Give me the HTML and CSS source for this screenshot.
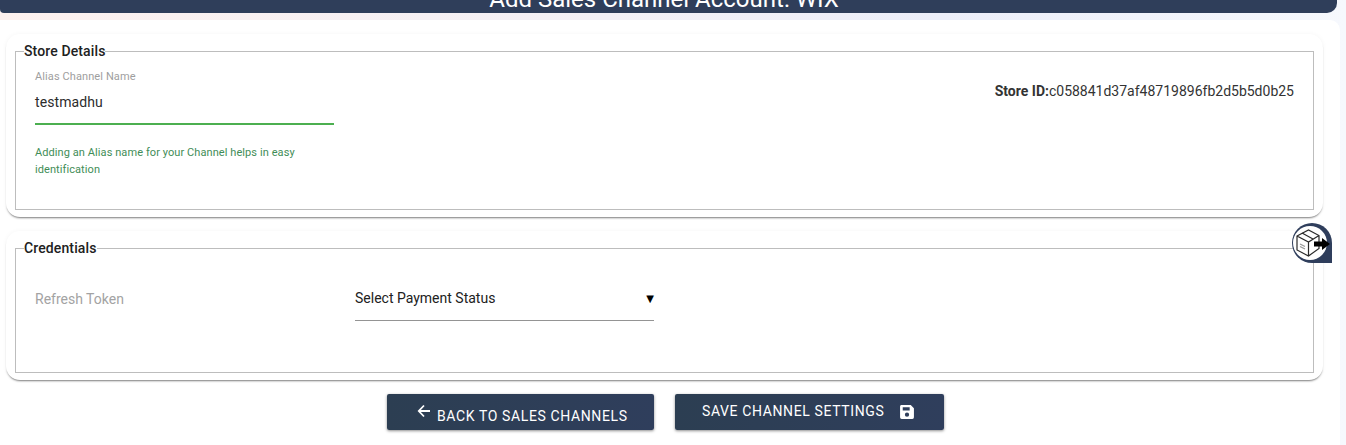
FILE: index.html
```html
<!DOCTYPE html>
<html lang="en">
<head>
<meta charset="utf-8">
<title>Add Sales Channel Account: WIX</title>
<link rel="stylesheet" href="styles.css">
</head>
<body>
<div class="page">
  <header class="topbar"><h1 class="title">Add Sales Channel Account: WIX</h1></header>
  <main class="panel">
    <section class="card card-store">
      <fieldset class="group group-store">
        <legend class="legend">Store Details</legend>
        <div class="store-row">
          <div class="alias">
            <label class="alias-label">Alias Channel Name</label>
            <div class="alias-value">testmadhu</div>
            <p class="alias-help">Adding an Alias name for your Channel helps in easy identification</p>
          </div>
          <div class="store-id"><b>Store ID:</b>c058841d37af48719896fb2d5b5d0b25</div>
        </div>
      </fieldset>
    </section>
    <section class="card card-cred">
      <fieldset class="group group-cred">
        <legend class="legend">Credentials</legend>
        <div class="cred-row">
          <div class="token">Refresh Token</div>
          <div class="select"><span>Select Payment Status</span><span class="caret">▼</span></div>
        </div>
      </fieldset>
    </section>
    <div class="actions">
      <button class="btn btn-back" type="button">
        <svg class="arrow" width="16" height="16" viewBox="0 0 16 16" aria-hidden="true"><path d="M14 8H3M8 2.500 2.800 8 8 13.500" fill="none" stroke="#fff" stroke-width="1.800"/></svg>
        <span>BACK TO SALES CHANNELS</span>
      </button>
      <button class="btn btn-save" type="button">
        <span>SAVE CHANNEL SETTINGS</span>
        <svg class="disk" width="16" height="16" viewBox="0 0 15 15" aria-hidden="true"><path fill-rule="evenodd" fill="#fff" d="M2 1h9l3 3v8.500a1.500 1.500 0 0 1-1.500 1.500h-10A1.500 1.500 0 0 1 1 12.500v-10A1.500 1.500 0 0 1 2 1zM3.500 3v3h6.500V3zM7.500 8a2 2 0 1 0 0 4 2 2 0 0 0 0-4z"/></svg>
      </button>
    </div>
  </main>
  <div class="badge">
    <svg width="38" height="36" viewBox="0 0 38 36" aria-hidden="true">
      <ellipse cx="17" cy="18" rx="17" ry="17" fill="#fff"/>
      <path d="M4 11 15.500 5 26 10.500v13L15.500 31 4 25zM4 11l11.500 6L26 10.500M15.500 17v14M9 8l11 6" fill="none" stroke="#2b2b2b" stroke-width="1.200"/>
      <path d="M7 19l5 2.500M7 21.500l5 2.500" stroke="#999" stroke-width="1.300"/>
      <path d="M21 16.500h8V13l8 6-8 6v-3.500h-8z" fill="#000"/>
    </svg>
  </div>
</div>
</body>
</html>
```
FILE: styles.css
```css
* { box-sizing: border-box; }
html, body { margin: 0; height: 100%; overflow: hidden; }
body { font-family: Roboto, "Liberation Sans", sans-serif; color: #212121; background: #f7f8fc; }
.page {
  position: relative;
  width: 1346px;
  height: 445px;
  overflow: hidden;
  background: linear-gradient(90deg, #fdf1ef 0%, #f3f0f6 45%, #eceef9 70%, #f6f8fd 100%);
}
.topbar {
  width: 1337px;
  height: 13px;
  background: #2f3e5a;
  border-radius: 0 0 10px 4px;
  display: flex;
  justify-content: center;
  align-items: flex-end;
  overflow: hidden;
}
.title {
  margin: 0 9px 2px 0;
  font-size: 24px;
  line-height: 24px;
  font-weight: 400;
  color: #fff;
  white-space: nowrap;
}
.panel {
  margin-top: 7px;
  width: 1340px;
  height: 425px;
  background: #fff;
  border-radius: 0 10px 0 0;
  padding: 14px 17px 0 6px;
}
.card {
  background: #fff;
  border-radius: 14px;
  box-shadow: 0 2px 2px -1px rgba(0, 0, 0, 0.5), 0 0 5px rgba(0, 0, 0, 0.04);
  padding: 9px 9px 7px;
}
.card-store { height: 183px; }
.card-cred { height: 149px; margin-top: 14px; }
.group {
  margin: 0;
  padding: 0;
  border: 1px solid #bdbdbd;
  min-width: 0;
}
.group-store { height: 167px; }
.group-cred { height: 133px; }
.legend {
  margin-left: 8px;
  padding: 0;
  font-size: 14px;
  line-height: 16px;
  font-weight: 500;
  letter-spacing: 0.12px;
  color: #212121;
}
.store-row {
  display: flex;
  justify-content: space-between;
  padding: 11px 19px 0;
}
.alias { width: 299px; }
.alias-label {
  display: block;
  font-size: 11px;
  line-height: 14px;
  letter-spacing: 0.1px;
  color: #9e9e9e;
}
.alias-value {
  box-sizing: content-box;
  height: 31px;
  padding-top: 8px;
  font-size: 14px;
  line-height: 20px;
  letter-spacing: 0.1px;
  border-bottom: 2px solid #4caf50;
  color: #2c2c2c;
}
.alias-help {
  margin: 19px 0 0;
  font-size: 11px;
  line-height: 17px;
  letter-spacing: 0.08px;
  color: #3f8d57;
}
.store-id {
  margin-top: 13px;
  font-size: 14px;
  line-height: 16px;
  color: #333;
}
.store-id b { font-weight: 700; }
.cred-row {
  display: flex;
  align-items: flex-start;
  padding: 28px 0 0 19px;
}
.token {
  width: 320px;
  padding-top: 7px;
  font-size: 14px;
  line-height: 16px;
  color: #a3a3a3;
}
.select {
  width: 299px;
  height: 37px;
  display: flex;
  justify-content: space-between;
  align-items: flex-start;
  padding-top: 6px;
  font-size: 14px;
  line-height: 16px;
  color: #212121;
  border-bottom: 1px solid #949494;
}
.caret { font-size: 10px; line-height: 18px; font-family: "DejaVu Sans", sans-serif; color: #000; }
.actions {
  display: flex;
  margin-top: 14px;
  padding-left: 381px;
  gap: 21px;
}
.btn {
  height: 36px;
  border: 0;
  border-radius: 2px;
  background: linear-gradient(90deg, #2c3e52, #2f3e5c);
  box-shadow: 0 1px 3px rgba(0, 0, 0, 0.45);
  color: #fff;
  font-family: inherit;
  font-size: 14px;
  font-weight: 400;
  letter-spacing: 0.62px;
  display: flex;
  padding: 0;
}
.btn-back { width: 267px; padding: 14px 0 0 29px; gap: 5px; align-items: flex-start; line-height: 16px; }
.btn-back .arrow { margin-top: -5px; }
.btn-save { width: 269px; padding: 9px 0 0 27px; gap: 15px; align-items: flex-start; line-height: 16px; }
.btn-save .disk { margin-top: 1px; }
.badge {
  position: absolute;
  left: 1292px;
  top: 223px;
  width: 40px;
  height: 40px;
  background: #2f3e5c;
  border-radius: 50% 50% 0 50%;
  display: flex;
  align-items: center;
  justify-content: flex-end;
  padding-right: 1px;
}
```
